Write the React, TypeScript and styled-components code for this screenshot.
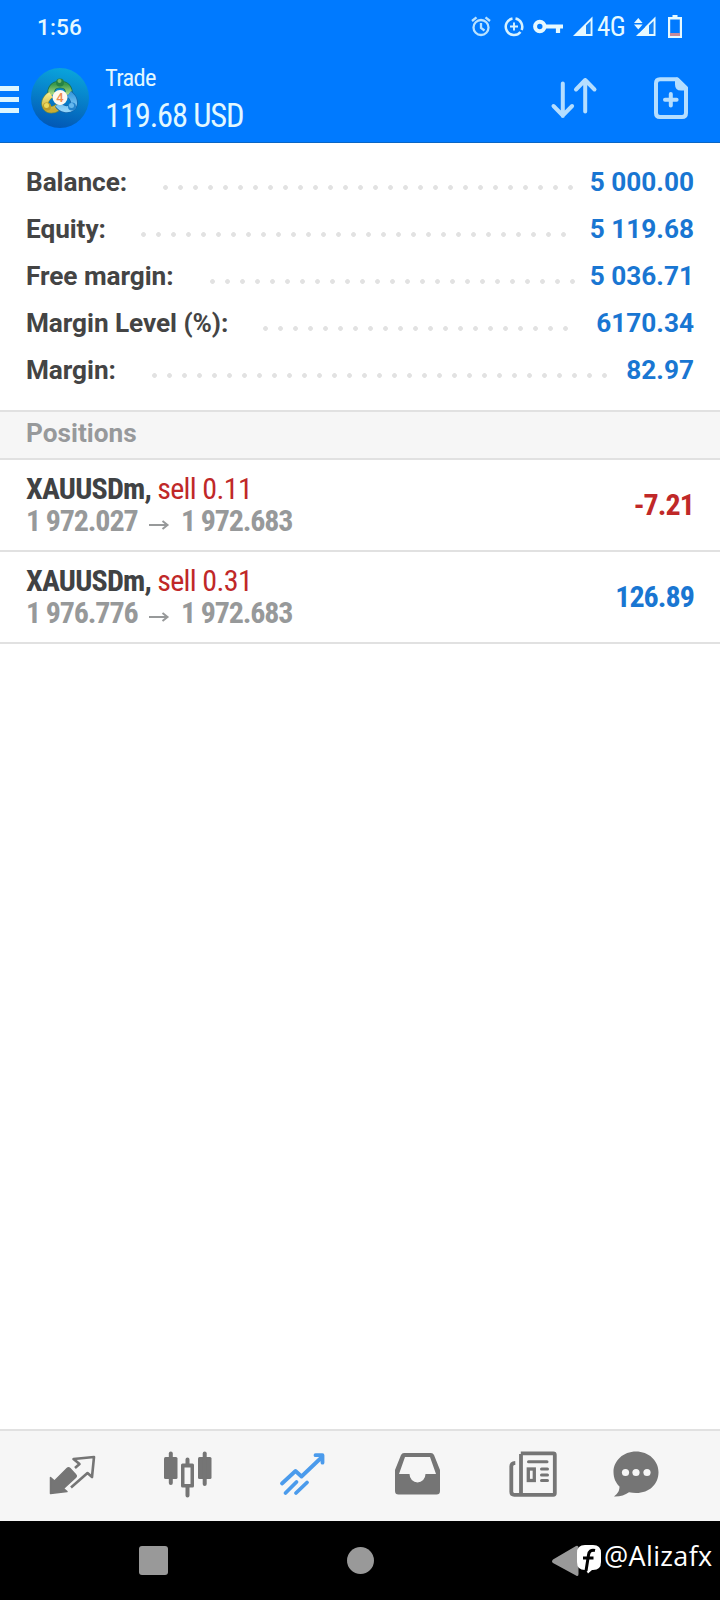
import React from 'react';
import styled, { createGlobalStyle } from 'styled-components';

const GlobalStyle = createGlobalStyle`
  * { box-sizing: border-box; }
  body { margin: 0; background: #fff; font-family: Roboto, 'Liberation Sans', sans-serif; }
`;

const condensed = `font-family: 'Roboto Condensed', Roboto, sans-serif; font-stretch: 75%;`;

const Screen = styled.div`
  display: flex; flex-direction: column;
  width: 720px; height: 1600px; background: #fff; overflow: hidden;
`;
const Header = styled.header`
  height: 143px; background: #007aff; border-bottom: 1px solid #0b66c4; flex: none;
`;
const StatusBar = styled.div`
  display: flex; align-items: flex-start; height: 54px; padding: 0 38px 0 37px; color: #e6f9ff;
`;
const Clock = styled.span`
  flex: 1; margin-top: 12px; font-size: 22.5px; line-height: 30px; font-weight: 500; letter-spacing: 0.2px;
`;
const StatusIcon = styled.svg<{ $gap: number }>`
  display: block; flex: none; height: 24px; margin: 15px 0 0 ${p => p.$gap}px;
`;
const Network = styled.span`
  ${condensed}
  width: 28px; margin: 12px 0 0 4px; font-size: 27px; line-height: 30px; font-weight: 400; letter-spacing: -0.5px; white-space: nowrap;
`;
const AppBar = styled.div`
  display: flex; align-items: center; height: 88px; padding-right: 29px;
`;
const Menu = styled.div`
  display: flex; flex-direction: column; gap: 6px; width: 19px; margin-top: 2px;
`;
const MenuLine = styled.span`height: 5px; background: #dcf6ff;`;
const Logo = styled.svg`display: block; margin-left: 12px;`;
const Titles = styled.div`
  flex: 1; margin-left: 16px; color: #e2f8ff; ${condensed}
`;
const Title = styled.div`font-size: 24.5px; line-height: 32px; letter-spacing: -0.7px; padding-top: 3px;`;
const Profit = styled.div`font-size: 32.5px; line-height: 43px; letter-spacing: -1.15px; padding-top: 1px;`;
const ActionIcon = styled.svg<{ $gap?: number }>`display: block; margin: 0 0 0 ${p => p.$gap ?? 0}px;`;

const Summary = styled.section`padding: 16px 26px 0; height: 267px; flex: none;`;
const SummaryRow = styled.div`
  display: flex; height: 47px; line-height: 47px; font-size: 26.2px; font-weight: 700;
`;
const Label = styled.span<{ $width: number }>`
  width: ${p => p.$width}px; color: #444; letter-spacing: -0.06px; white-space: nowrap;
`;
const Leader = styled.span<{ $dots: number }>`
  width: ${p => p.$dots * 15}px; height: 7px; margin-top: 25px;
  background: radial-gradient(circle at 50% 50%, #e2e2e2 2px, transparent 2.8px) 0 0 / 15px 7px repeat-x;
`;
const Amount = styled.span`margin-left: auto; color: #1976d2; white-space: nowrap;`;

const SectionTitle = styled.h2`
  height: 50px; margin: 0; padding: 0 26px; flex: none;
  border-top: 2px solid #e1e1e1; border-bottom: 2px solid #e1e1e1; background: #f6f6f6;
  color: #97999b; font-size: 26.2px; line-height: 43px; font-weight: 700;
`;
const Position = styled.article`
  display: flex; align-items: center; height: 92px; padding: 0 26px; flex: none;
  border-bottom: 2px solid #e1e1e1; font-size: 30px; font-weight: 700; ${condensed}
`;
const PositionText = styled.div`flex: 1; line-height: 32px; white-space: nowrap;`;
const Symbol = styled.div`color: #404244; letter-spacing: -0.8px;`;
const Side = styled.span`color: #c02828; font-weight: 400; letter-spacing: -0.65px;`;
const Prices = styled.div`color: #97999a; display: flex; letter-spacing: -1.15px;`;
const Arrow = styled.svg`margin: 13px 10.5px 0 12px;`;
const Result = styled.span<{ $loss?: boolean }>`
  letter-spacing: -0.95px; padding-bottom: 2px; color: ${p => (p.$loss ? '#c02828' : '#1976d2')};
`;

const Tabs = styled.nav`
  display: flex; gap: 59px; height: 92px; margin-top: auto; padding: 18px 44px 0; flex: none;
  border-top: 2px solid #e1e1e1; background: #f6f6f6;
`;
const Tab = styled.svg`display: block; flex: none; width: 56px; height: 56px; color: #757575; overflow: visible;`;
const SystemBar = styled.footer`
  display: flex; align-items: center; height: 79px; background: #000; flex: none; padding-left: 139px;
`;
const Recent = styled.span`width: 29px; height: 29px; border-radius: 3px; background: #999;`;
const Home = styled.span`width: 27px; height: 27px; margin-left: 179px; border-radius: 50%; background: #999;`;
const Back = styled.svg`margin-left: 177px;`;
const Handle = styled.span`
  margin: -9px 0 0 3px; color: #fff; font: 400 27px/36px 'Open Sans', sans-serif; letter-spacing: 0.35px; white-space: nowrap;
`;

const summary = [
  { label: 'Balance:', value: '5 000.00', start: 132, dots: 28 },
  { label: 'Equity:', value: '5 119.68', start: 110, dots: 29 },
  { label: 'Free margin:', value: '5 036.71', start: 179, dots: 25 },
  { label: 'Margin Level (%):', value: '6170.34', start: 232, dots: 21 },
  { label: 'Margin:', value: '82.97', start: 121, dots: 31 },
];
const positions = [
  { volume: '0.11', open: '1 972.027', current: '1 972.683', result: '-7.21', loss: true },
  { volume: '0.31', open: '1 976.776', current: '1 972.683', result: '126.89', loss: false },
];

function StatusIcons() {
  return (
    <>
      <StatusIcon $gap={0} width="20" viewBox="0 0 20 24" fill="none" stroke="#b9e2ff" strokeWidth="2.3">
        <circle cx="10" cy="12.5" r="7.5" /><path d="M10 8v5l3.5 2.5M1 6l4.5-3.7M19 6l-4.5-3.7" />
      </StatusIcon>
      <StatusIcon $gap={12.5} width="20" viewBox="0 0 20 24" fill="none" stroke="#d6f2ff" strokeWidth="2.5">
        <path d="M8.5 3.600A8.3 8.3 0 1 0 16.5 17M11.5 3.600A8.3 8.3 0 0 1 17.600 15" /><path d="M10 7.5v8M6 11.5h8" strokeWidth="1.9" />
      </StatusIcon>
      <StatusIcon $gap={9} width="31" viewBox="0 0 31 24" fill="none" stroke="#e6f9ff">
        <circle cx="6.8" cy="11.5" r="4.7" strokeWidth="4" /><path d="M12 11.5h18M25 12v6" strokeWidth="4.2" />
      </StatusIcon>
      <StatusIcon $gap={9.5} width="20" viewBox="0 0 20 24">
        <path d="M0 21 19.5 1.500V21z" fill="#e6f9ff" /><path d="M13 10.5 17.600 6v13H13z" fill="#1583f5" />
      </StatusIcon>
      <Network>4G</Network>
      <StatusIcon $gap={9} width="22" viewBox="0 0 22 24">
        <path d="M2 21 21.5 1.500V21z" fill="#e6f9ff" /><path d="M15 10.5 19.600 6v13H15z" fill="#1583f5" />
        <path d="M-1 9 5 1l6 8v3l-6 6-6-6z" fill="#007aff" /><path d="M0 8 4.300 3l4.300 5zM0 9.500h8.600L4.300 14.500z" fill="#e6f9ff" />
      </StatusIcon>
      <StatusIcon $gap={12} width="14" viewBox="0 0 14 24">
        <path d="M4.500 0h5v2H14v21H0V2h4.500zM2.200 4.500v13.700h9.600V4.500z" fill="#e6f9ff" fillRule="evenodd" />
        <path d="M2 18h10v3H2z" fill="#c78a99" />
      </StatusIcon>
    </>
  );
}

function BrandLogo() {
  return (
    <Logo width="58" height="60" viewBox="0 0 58 60">
      <defs>
        <linearGradient id="disc" x1="0.6" y1="0" x2="0.4" y2="1"><stop offset="0" stopColor="#0aa5dc" /><stop offset="1" stopColor="#0257b5" /></linearGradient>
        <linearGradient id="green" x1="0" y1="0" x2="0" y2="1"><stop offset="0" stopColor="#3c9a4c" /><stop offset="1" stopColor="#b4e088" /></linearGradient>
        <linearGradient id="gold" x1="0" y1="0" x2="0" y2="1"><stop offset="0" stopColor="#f2e888" /><stop offset="1" stopColor="#c9ac35" /></linearGradient>
        <linearGradient id="sky" x1="0" y1="0" x2="0" y2="1"><stop offset="0" stopColor="#3c9ee0" /><stop offset="1" stopColor="#90d2f8" /></linearGradient>
      </defs>
      <ellipse cx="29" cy="30" rx="29" ry="30" fill="url(#disc)" />
      <path d="M20.500 27C19 20 23 16.500 29 16.500s10 3.500 8.500 10.500" fill="none" stroke="#1a6f48" strokeWidth="7.500" />
      <path d="M20.500 27C19 20 23 16.500 29 16.500s10 3.500 8.500 10.500" fill="none" stroke="url(#green)" strokeWidth="6" />
      <path d="M20 26.500c-6 4-7.500 9.500-4.500 13s9 2.500 12-1" fill="none" stroke="#6f8a45" strokeWidth="7.500" />
      <path d="M20 26.500c-6 4-7.500 9.500-4.500 13s9 2.500 12-1" fill="none" stroke="url(#gold)" strokeWidth="6" />
      <path d="M38 26c5.500 4 6.500 10 3 13.500-4 3-10.500 2-14-3" fill="none" stroke="#1663a8" strokeWidth="7.500" />
      <path d="M38 26c5.500 4 6.500 10 3 13.500-4 3-10.500 2-14-3" fill="none" stroke="url(#sky)" strokeWidth="6" />
      <circle cx="29" cy="14.500" r="4" fill="#258246" /><circle cx="28.500" cy="13" r="2" fill="#74ba67" />
      <circle cx="16" cy="38.500" r="4" fill="#b99a2c" /><circle cx="15.500" cy="37.500" r="2.500" fill="#ecd95c" />
      <circle cx="41" cy="38.500" r="4" fill="#2383cd" /><circle cx="40.500" cy="37.500" r="2.500" fill="#66b8ee" />
      <circle cx="29" cy="29.500" r="7.500" fill="#fff8ef" />
      <text x="29" y="34" textAnchor="middle" fontSize="13" fontWeight="500" fontFamily="Roboto" fill="#ed8b50">4</text>
    </Logo>
  );
}

function TabBar() {
  return (
    <Tabs>
      <Tab viewBox="44 1449 56 56" stroke="currentColor" strokeLinejoin="round">
        <path d="M50.500 1477.500l4 3.500 12.500-12.500c1-1 2-1 3 0l5.500 6c1 1 1 2 0 3l-12 11 3.500 3-16.500 2z" fill="currentColor" strokeWidth="1.500" />
        <path d="M75 1468l4.500-4-6-5 20.500-2-2 20-4.500-4L71 1487.500" fill="none" strokeWidth="2.600" />
      </Tab>
      <Tab viewBox="159 1449 56 56" fill="currentColor">
        <rect x="164" y="1457" width="13.500" height="22" rx="1.500" /><rect x="168.800" y="1451.500" width="4" height="33.500" rx="2" />
        <rect x="198" y="1457" width="13.500" height="22" rx="1.500" /><rect x="202.700" y="1451.500" width="4" height="34.500" rx="2" />
        <path d="M182.500 1463.500h10a1.500 1.500 0 0 1 1.500 1.500v21a1.500 1.500 0 0 1-1.500 1.500h-10a1.500 1.500 0 0 1-1.500-1.500v-21a1.500 1.500 0 0 1 1.500-1.500zm2 4v16.500h6v-16.500z" fillRule="evenodd" />
        <path d="M185.500 1464v-4.500a2 2 0 0 1 4 0v4.500zM185.500 1487h4v8.500a2 2 0 0 1-4 0z" />
      </Tab>
      <Tab viewBox="274 1449 56 56" fill="none" stroke="#4b9bec" strokeWidth="3.800" strokeLinecap="round">
        <path d="M282 1483.500l13.500-12.500 6 5.500 21-20M315.500 1455.200h7v7.500" strokeLinejoin="round" /><path d="M285.500 1493l11-11M296 1493l11-10.500" />
      </Tab>
      <Tab viewBox="389 1449 56 56" fill="currentColor">
        <path d="M404 1453h27q2 0 3 2l6 15v21q0 3.500-3.500 3.500h-38q-3.500 0-3.500-3.500v-21l6-15q1-2 3-2zm1 4-6 17h10.500a8 8.500 0 0 0 16 0H436l-6-17z" fillRule="evenodd" />
      </Tab>
      <Tab viewBox="504 1449 56 56" fill="none" stroke="currentColor" strokeWidth="3.800">
        <path d="M520.800 1453.300h32.500q1.500 0 1.500 1.500v38.500q0 1.500-1.500 1.500h-39q-3 0-3-3v-25.500q0-3.300 4-3.500M521 1494v-40" strokeLinejoin="round" />
        <path d="M528.500 1461.700h18.500M541.500 1469h6M541.500 1475h6M541.500 1480.500h6" strokeWidth="3" strokeLinecap="round" /><rect x="528.300" y="1469" width="6" height="11.500" strokeWidth="3.300" />
      </Tab>
      <Tab viewBox="619 1449 56 56" fill="currentColor">
        <path d="M636 1451.500c-12.500 0-22.500 9-22.500 20.500 0 6.500 2.500 11 6 14.500 0 4-1.500 7-5.500 10 6 .2 11-1.300 15-4.300 17 3.800 29.500-6 29.500-20.200 0-11.500-10-20.500-22.500-20.500z" />
        <g fill="#f6f6f6"><circle cx="625.500" cy="1472.500" r="3.600" /><circle cx="636" cy="1472.500" r="3.600" /><circle cx="647" cy="1472.500" r="3.600" /></g>
      </Tab>
    </Tabs>
  );
}

export default function App() {
  return (
    <Screen>
      <GlobalStyle />
      <Header>
        <StatusBar><Clock>1:56</Clock><StatusIcons /></StatusBar>
        <AppBar>
          <Menu><MenuLine /><MenuLine /><MenuLine /></Menu>
          <BrandLogo />
          <Titles><Title>Trade</Title><Profit>119.68 USD</Profit></Titles>
          <ActionIcon width="48" height="42" viewBox="550 77 48 42" fill="none" stroke="#b5deff" strokeWidth="4" strokeLinecap="round" strokeLinejoin="round">
            <path d="M562.800 83.500V116M553.500 106l9.300 9.500 9.300-9.500M585.200 111.500V80M576 89.500l9.200-9.500 9.300 9.500" />
          </ActionIcon>
          <ActionIcon $gap={55} width="38" height="42" viewBox="653 77 38 42" fill="none" stroke="#b5deff" strokeWidth="4" strokeLinejoin="round">
            <path d="M677 79.300h-17q-4 0-4 4v29.700q0 4 4 4h22q4 0 4-4V88z" /><path d="M677 79.500v5q0 4 4 4h5z" fill="#b5deff" /><path d="M670.800 94v11.500M665 99.800h11.600" strokeLinecap="round" />
          </ActionIcon>
        </AppBar>
      </Header>
      <Summary>
        {summary.map(r => (
          <SummaryRow key={r.label}><Label $width={r.start}>{r.label}</Label><Leader $dots={r.dots} /><Amount>{r.value}</Amount></SummaryRow>
        ))}
      </Summary>
      <SectionTitle>Positions</SectionTitle>
      {positions.map(p => (
        <Position key={p.volume}>
          <PositionText>
            <Symbol>XAUUSDm, <Side>sell {p.volume}</Side></Symbol>
            <Prices>{p.open}
              <Arrow width="21" height="14" viewBox="0 0 21 14" fill="none" stroke="#97999a" strokeWidth="2"><path d="M0 7h18M13.500 3l5 4-5 4" /></Arrow>
              {p.current}
            </Prices>
          </PositionText>
          <Result $loss={p.loss}>{p.result}</Result>
        </Position>
      ))}
      <TabBar />
      <SystemBar>
        <Recent /><Home />
        <Back width="50" height="34" viewBox="551 1543 50 34">
          <path d="M553 1558.500 576 1545q2.500-1 2.500 2v26q0 3-2.500 1.500L553 1562q-2-1.500 0-3.500z" fill="#999" />
          <path d="M585 1544h8q8 0 8 8v9q0 8-8 8h-1l-4 3.500-2-3.500h-1q-8 0-8-8v-9q0-8 8-8z" fill="#fff" />
          <path d="M595 1549.500c-4-1-6 1-6.500 4.500l-2.500 16M583 1557h10.500" fill="none" stroke="#000" strokeWidth="3" />
        </Back>
        <Handle>@Alizafx</Handle>
      </SystemBar>
    </Screen>
  );
}
